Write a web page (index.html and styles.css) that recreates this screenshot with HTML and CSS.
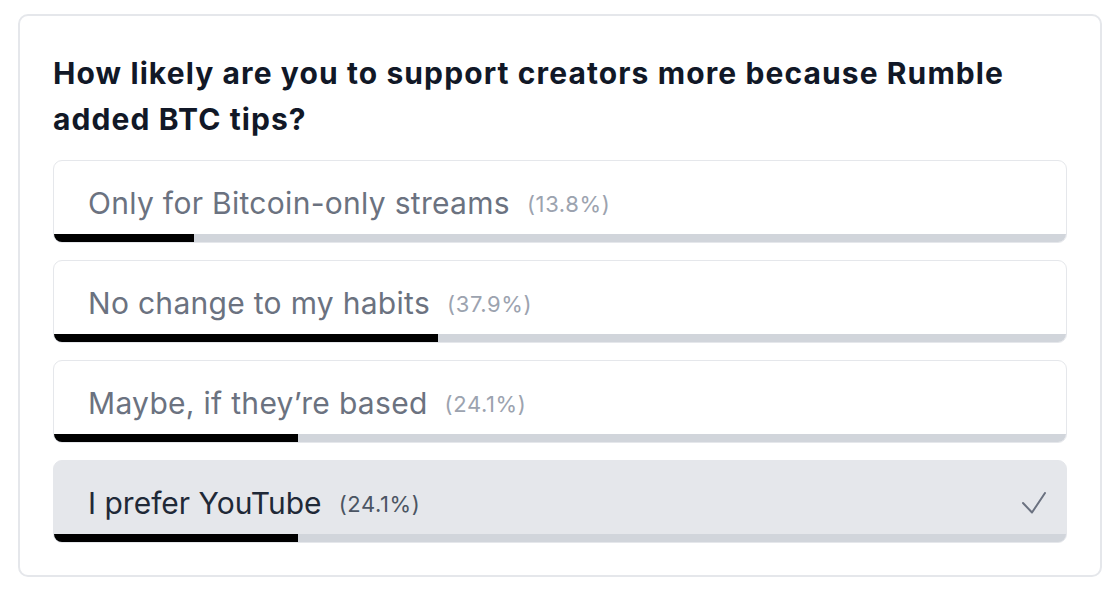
FILE: index.html
```html
<!DOCTYPE html>
<html lang="en">
<head>
<meta charset="utf-8">
<title>Poll</title>
<link rel="stylesheet" href="styles.css">
</head>
<body>
<div class="card">
  <h2 class="question">How likely are you to support creators more because Rumble added BTC tips?</h2>
  <div class="options">
    <div class="option">
      <div class="label"><span class="text">Only for Bitcoin-only streams</span><span class="pct">(13.8%)</span></div>
      <div class="track"><div class="fill" style="width:13.8%"></div></div>
    </div>
    <div class="option">
      <div class="label"><span class="text">No change to my habits</span><span class="pct">(37.9%)</span></div>
      <div class="track"><div class="fill" style="width:37.9%"></div></div>
    </div>
    <div class="option">
      <div class="label"><span class="text">Maybe, if they’re based</span><span class="pct">(24.1%)</span></div>
      <div class="track"><div class="fill" style="width:24.1%"></div></div>
    </div>
    <div class="option selected">
      <div class="label"><span class="text">I prefer YouTube</span><span class="pct">(24.1%)</span>
        <svg class="check" width="24" height="22" viewBox="0 0 24 22"><polyline points="1,11 10,20.5 23,1" fill="none" stroke="#6b7280" stroke-width="2" stroke-linecap="round" stroke-linejoin="round"/></svg>
      </div>
      <div class="track"><div class="fill" style="width:24.1%"></div></div>
    </div>
  </div>
</div>
</body>
</html>
```
FILE: styles.css
```css
html, body {
  margin: 0;
  padding: 0;
  background: #ffffff;
}
body {
  font-family: Inter, "Noto Sans", "Liberation Sans", sans-serif;
  padding: 14px 18px 17px 18px;
}
.card {
  width: 1084px;
  box-sizing: border-box;
  height: 563px;
  border: 2px solid #e5e7eb;
  border-radius: 10px;
  padding: 34px 33px 32px 33px;
  background: #fff;
}
.question {
  margin: 0;
  font-size: 30px;
  line-height: 46px;
  font-weight: 700;
  color: #111827;
  letter-spacing: 1.1px;
}
.options {
  margin-top: 18px;
  display: flex;
  flex-direction: column;
  gap: 17px;
}
.option {
  height: 83px;
  box-sizing: border-box;
  border: 1px solid #e5e7eb;
  border-radius: 9px;
  overflow: hidden;
  display: flex;
  flex-direction: column;
  background: #fff;
}
.option.selected {
  background: #e5e7eb;
}
.label {
  flex: 1;
  display: flex;
  align-items: center;
  padding: 11px 20px 0 34px;
  color: #6b7280;
}
.text {
  font-size: 30px;
  line-height: 36px;
  letter-spacing: 0.3px;
}
.pct {
  font-size: 22px;
  line-height: 36px;
  color: #9ca3af;
  margin-left: 17px;
  padding-top: 2px;
  letter-spacing: 0.6px;
}
.selected .text {
  color: #1f2937;
  letter-spacing: 0;
}
.selected .pct {
  color: #4b5563;
}
.check {
  margin-left: auto;
}
.track {
  height: 8px;
  background: #d1d5db;
  flex: none;
}
.fill {
  height: 100%;
  background: #000;
}
```
